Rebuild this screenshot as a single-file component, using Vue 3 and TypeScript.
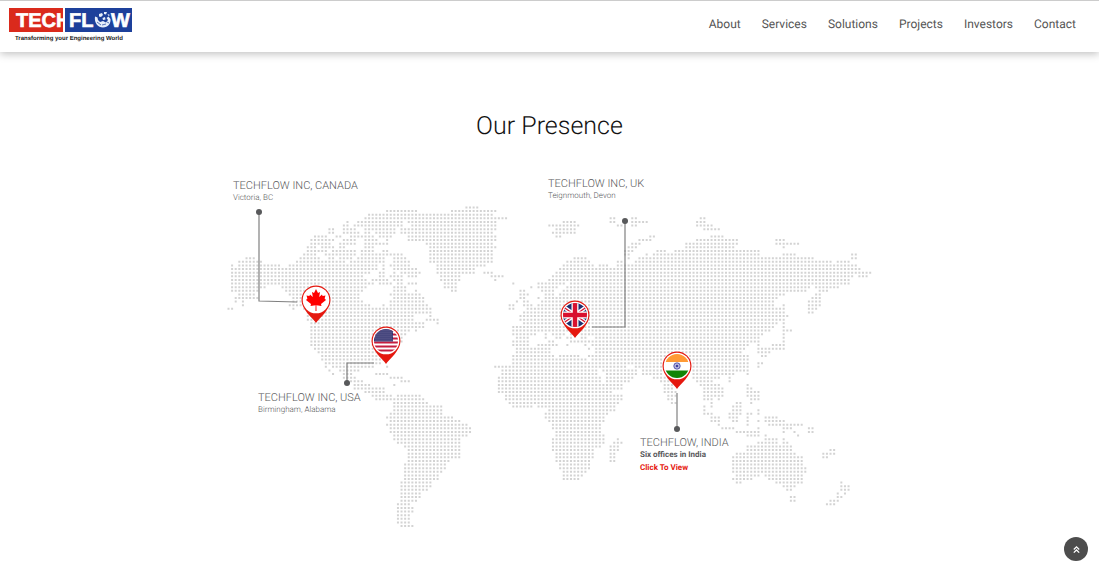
<script setup lang="ts">
interface Dot {
  x: number
  y: number
}

interface Office {
  id: string
  title: string
  detail: string
}

const links: string[] = ['About', 'Services', 'Solutions', 'Projects', 'Investors', 'Contact']

const offices: Office[] = [
  { id: 'canada', title: 'TECHFLOW INC, CANADA', detail: 'Victoria, BC' },
  { id: 'uk', title: 'TECHFLOW INC, UK', detail: 'Teignmouth, Devon' },
  { id: 'usa', title: 'TECHFLOW INC, USA', detail: 'Birmingham, Alabama' },
]

// Land extents for each latitude row, west to east, in map units.
const landRows: string[] = [
  '465-476',
  '386-415 451-494',
  '368-490',
  '364-507 610-613 631-636 699-703',
  '347 357-401 407-497 563-575 610-614 631-646 696-703',
  '343-347 354-400 411-497 549-579 617-620 631-637 696-710',
  '329-332 343-354 364-393 400-494 556-575 703-718',
  '329-332 343-357 364-370 377-393 400-490 553-575',
  '314-325 336-340 350-371 379-390 407-497 556-560 649-653 710-722',
  '311-332 343-354 364-375 386 407-494 638-650 696-736 778-785',
  '311-329 339-354 364-386 425-490 631-635 639 685-736 778-799',
  '307-314 322-332 339-343 364-372 432-494 627-635 685-732 782-785',
  '307-325 332-354 361-372 383-386 432-490 624-633 656-664 675-760',
  '304-314 325-354 361-401 432-490 624-628 646 653-760 782-796 853-857',
  '246-254 300-318 329-332 339-350 357-383 393-404 432-490 574-587 627 639-814 853-857',
  '240-261 297-345 350-383 393-408 432-490 567-590 617-621 635-832 839-849',
  '233 240-280 290-376 383 390-408 436-483 563-593 600-607 617-857',
  '233-376 383 393-415 436-472 560-597 600-610 614-860',
  '233-368 379-383 393 400-418 436-472 486-490 556-871',
  '233-361 379-383 390-400 408-415 440-458 490-504 553-853 860-867',
  '233-365 372-386 393-400 440-458 494-497 549-849',
  '233-372 379-389 397-400 408-415 443-454 514 539-563 570-849',
  '233-266 283-365 393-404 443-454 532 538-557 567-810 817-839',
  '233-256 287-361 393-404 415 451-454 522-525 542-553 563-807 821-828',
  '240-254 290-358 390-418 521-528 545-553 560-782 817-821',
  '236-257 293-360 393-422 521-525 538 545-778 814-821',
  '236 243 293-363 390-422 518 525-528 542-774 810-821',
  '243 290-368 383 390-425 511-515 525-532 538-774 785 810-821',
  '229-232 293 303-429 511-514 528-785 810-817',
  '307-429 525-785 810-814',
  '307-411 429 521-789',
  '307-411 425-436 521-785',
  '311-422 436 525-778 785',
  '311-422 514-774 785',
  '311-408 415 514-771 782-792',
  '311-404 514-535 547 553-563 570 581-589 593-763 782-785',
  '311-402 517-528 547 556-560 566-572 580-586 596-760 782-785',
  '311-400 514-528 550-553 570-577 583-589 593-760 782-785',
  '311-398 514-527 537-550 553-558 567 585 593-749 757-760 774-782',
  '314-396 517-550 590 597-745 757-782',
  '318-393 517-550 597-742 757-771',
  '321-390 514-553 560-577 590-747 763-767',
  '321-386 514-587 593-749',
  '325-379 514-597 600-749 760-763',
  '325 332-374 387 497-597 600-624 635-747 760',
  '328 339-358 503-597 603-637 642-660 690-747',
  '332 343-350 378-386 503-597 607-637 643-650 654-662 692-732 746',
  '343-354 389-402 500-600 607-633 654-668 694-720 728',
  '350-361 403-410 500-600 607-629 660-670 696-713 728',
  '353-368 393 500-602 607-623 663-673 700-720 749',
  '353-383 500-607 610-620 665-673 706-724 746-753',
  '367-383 500-612 665-676 706-724 746-757',
  '371-389 397-418 506-622 668-676 706-724 749-757',
  '378-422 506-620 668-673 706-710 717 753-757',
  '393-425 510-618 672-675 710-713 738-742 753',
  '393-440 514-530 538-615 703 713 735-742',
  '393-440 549-613 703-706 732-742 760',
  '390-440 545-607 706-710 728-742 749-753 760',
  '386-451 545-604 710-717 728-738 746-749 767-778',
  '390-461 549-604 713-717 732-738 746 757-760 767-785',
  '386-465 553-600 717 746-749 771-803',
  '390-469 553-600 721-732 757 782-792 810-813',
  '390-469 556-600 738-757 785 796 810-813',
  '393-465 556-603 749-757 767 799',
  '393-461 553-602 617 764-775 785',
  '397-461 553-602 613-620 757-775 785-789',
  '404-461 553-600 610-618 749-792',
  '408-458 553-593 610-618 749-792 832-835',
  '408-458 556-593 610-615 738-796 824-835',
  '408-458 556-593 610-615 735-800 824-828',
  '408-447 556-590 610-613 735-803',
  '404-443 560-590 735-803',
  '404-443 560-590 735-807',
  '404-440 563-587 735-807',
  '404-436 563-583 738-760 767-803',
  '404-436 563-578 735-753 771-800',
  '400-429 738-742 775-800 842',
  '400-429 782-796 842-849',
  '400-425 789-792 842-849',
  '400-418 839 846',
  '400-418 792-796 839-842',
  '400-415 792-796 832-839',
  '397-408 828-835',
  '397-411',
  '397-411',
  '397-408',
  '397-408',
  '397-408',
  '400-411',
]

const originX = 228.5
const originY = 207.5
const stepX = 3.605
const stepY = 3.62

const dots: Dot[] = landRows.flatMap((row, index) =>
  row.split(' ').flatMap((run) => {
    const ends = run.split('-').map(Number)
    const first = Math.round((ends[0] - originX) / stepX)
    const last = Math.round((ends[ends.length - 1] - originX) / stepX)
    return Array.from({ length: last - first + 1 }, (_, i) => ({
      x: originX + (first + i) * stepX,
      y: originY + index * stepY,
    }))
  }),
)

const landPath: string = dots
  .map((d) => `M${(d.x - 1).toFixed(2)} ${(d.y - 1).toFixed(2)}h2v2h-2z`)
  .join('')

const stars: Dot[] = Array.from({ length: 54 }, (_, i) => ({
  x: -11 + (i % 9) * 2 + (Math.floor(i / 9) % 2),
  y: -11 + Math.floor(i / 9) * 2,
}))

const spokes: number[] = Array.from({ length: 12 }, (_, i) => i * 30)

function toTop(): void {
  window.scrollTo({ top: 0, behavior: 'smooth' })
}
</script>

<template>
  <div class="page">
    <header class="header">
      <a class="brand" href="#" aria-label="Techflow home">
        <svg class="logo" viewBox="0 0 124 36" aria-hidden="true">
          <defs>
            <clipPath id="redBox"><rect width="54" height="24" /></clipPath>
          </defs>
          <rect width="54" height="24" fill="#da2a1c" />
          <rect x="56" width="67" height="24" fill="#1d409b" />
          <text class="mark" x="7" y="19" clip-path="url(#redBox)">TECH</text>
          <text class="mark" x="60" y="19">FL</text>
          <path
            d="M86 8.500C85 15 89 19.500 94 19.500C99 19.500 102 15.500 101.500 11L99.500 8.500L97.500 10L99 12L97 14.500L94 13L91 14L89 12L88.500 9.500z"
            fill="#e6eefa"
          />
          <path
            d="M90 6L93 5L94 7L92 9L90 8.500zM95 4H98L97 6.500L95 6zM93.500 10L96 9L96.500 11.500L94 12zM98.500 6L101 7L99.500 8z"
            fill="#e6eefa"
          />
          <path d="M88 14L92 17M93 17L97 16M98 14L100 15" stroke="#1d409b" stroke-width="0.7" />
          <text class="mark" x="102" y="19">W</text>
          <text class="tagline" x="6" y="32">Transforming your Engineering World</text>
        </svg>
      </a>
      <nav class="nav" aria-label="Main">
        <a v-for="link in links" :key="link" href="#">{{ link }}</a>
      </nav>
    </header>

    <main class="presence">
      <h1>Our Presence</h1>
      <div class="stage">
        <svg class="map" viewBox="220 170 659 365" role="img" aria-label="World map of offices">
          <path :d="landPath" fill="#d3d3d3" />

          <g class="connector">
            <path d="M259 212V301L297 302" />
            <path d="M625 221V327H592" />
            <path d="M374 363H347V383" />
            <path d="M677 393V429" />
          </g>
          <g fill="#58595b">
            <circle cx="259" cy="212" r="3" />
            <circle cx="625" cy="221" r="3" />
            <circle cx="347" cy="383" r="3" />
            <circle cx="677" cy="429" r="3" />
          </g>

          <defs>
            <clipPath id="flagDisc"><circle r="12" /></clipPath>
            <g id="pin">
              <path d="M0 23C-3 18-14.500 10-14.500 0A14.500 14.500 0 0 1 14.500 0C14.500 10 3 18 0 23z" fill="#e5180f" />
              <circle r="13.300" fill="#fff" />
            </g>
          </defs>

          <g transform="translate(316 300)">
            <use href="#pin" />
            <path
              d="M0-11L2-7L4-8L3.200-3L6-5.500L6.600-4L9.500-4.400L8.600-1.500L10 0L5 4L5.500 6L0.400 5.200L0.500 11H-0.500L-0.400 5.200L-5.500 6L-5 4L-10 0L-8.600-1.500L-9.500-4.400L-6.600-4L-6-5.500L-3.200-3L-4-8L-2-7z"
              fill="#f00"
            />
          </g>

          <g transform="translate(386 341)">
            <use href="#pin" />
            <g clip-path="url(#flagDisc)">
              <path d="M-12-10.500H12M-12-6.500H12M-12-2.500H12M-12 1.500H12M-12 5.500H12M-12 9.500H12" stroke="#c51e3f" stroke-width="2" />
              <rect x="-12" y="-12" width="19" height="12.500" fill="#34336f" />
              <circle v-for="(star, i) in stars" :key="i" :cx="star.x" :cy="star.y" r="0.5" fill="#b4b4cf" />
            </g>
          </g>

          <g transform="translate(575 315)">
            <use href="#pin" />
            <g clip-path="url(#flagDisc)">
              <rect x="-12" y="-12" width="24" height="24" fill="#1d2f70" />
              <path d="M-13-9L13 9M13-9L-13 9" stroke="#fff" stroke-width="4" />
              <path d="M-13-9L13 9M13-9L-13 9" stroke="#d8102f" stroke-width="1.200" />
              <path d="M0-12V12M-12 0H12" stroke="#fff" stroke-width="7" />
              <path d="M0-12V12M-12 0H12" stroke="#d8102f" stroke-width="4.400" />
            </g>
          </g>

          <g transform="translate(677 366)">
            <use href="#pin" />
            <g clip-path="url(#flagDisc)">
              <rect x="-12" y="-12" width="24" height="8" fill="#ff9a35" />
              <rect x="-12" y="4.500" width="24" height="8" fill="#128507" />
              <circle r="3.200" fill="#e4e4f4" stroke="#34349a" stroke-width="0.800" />
              <path
                v-for="angle in spokes"
                :key="angle"
                d="M0 0V3"
                :transform="`rotate(${angle})`"
                stroke="#34349a"
                stroke-width="0.300"
              />
              <circle r="1.100" fill="#34349a" />
            </g>
          </g>
        </svg>

        <div v-for="office in offices" :key="office.id" class="office" :class="office.id">
          <h2>{{ office.title }}</h2>
          <p>{{ office.detail }}</p>
        </div>
        <div class="office india">
          <h2>TECHFLOW, INDIA</h2>
          <p class="strong">Six offices in India</p>
          <a href="#">Click To View</a>
        </div>
      </div>
    </main>

    <button class="top" type="button" aria-label="Back to top" @click="toTop">
      <svg viewBox="0 0 10 10" aria-hidden="true">
        <path d="M2 5L5 2L8 5M2 8.500L5 5.500L8 8.500" fill="none" stroke="#fff" stroke-width="1.400" />
      </svg>
    </button>
  </div>
</template>

<style>
body {
  margin: 0;
  background: #fff;
}
</style>

<style scoped>
.page {
  font-family: Roboto, "Liberation Sans", sans-serif;
  text-rendering: geometricPrecision;
  color: #58595b;
}

.header {
  display: flex;
  justify-content: space-between;
  align-items: flex-start;
  box-sizing: border-box;
  height: 52px;
  padding: 7px 23px 0 9px;
  border-top: 1px solid #ccc;
  background: #fff;
  box-shadow: 0 2px 8px rgba(0, 0, 0, 0.25);
}

.brand,
.logo {
  display: block;
}

.logo {
  width: 124px;
  height: 36px;
}

.mark {
  font: bold 20px "Liberation Sans", sans-serif;
  fill: #fff;
  stroke: #fff;
  stroke-width: 0.6px;
}

.tagline {
  font: bold 6px "Liberation Sans", sans-serif;
  fill: #222;
}

.nav {
  display: flex;
  gap: 21px;
  padding-top: 8px;
}

.nav a {
  font-size: 12px;
  line-height: 16px;
  color: #555;
  text-decoration: none;
}

.presence {
  padding-top: 57px;
}

h1 {
  margin: 0;
  font-size: 25px;
  font-weight: 300;
  line-height: 36px;
  text-align: center;
  color: #111;
}

.stage {
  position: relative;
  max-width: 659px;
  margin: 25px auto 0;
}

.map {
  display: block;
  width: 100%;
}

.connector {
  fill: none;
  stroke: #808080;
  stroke-width: 1.2;
}

.office {
  position: absolute;
}

.office h2 {
  margin: 0;
  font-size: 11px;
  font-weight: 300;
  line-height: 12px;
}

.office p {
  margin: 0;
  font-size: 8px;
  font-weight: 300;
  line-height: 11px;
}

.office .strong {
  font-weight: 700;
}

.office a {
  display: block;
  margin-top: 2px;
  font-size: 8px;
  font-weight: 700;
  line-height: 11px;
  color: #e5180f;
  text-decoration: none;
}

.canada {
  left: 13px;
  top: 10px;
}

.uk {
  left: 328px;
  top: 8px;
}

.usa {
  left: 38px;
  top: 222px;
}

.india {
  left: 420px;
  top: 267px;
}

.top {
  position: fixed;
  right: 11px;
  bottom: 9px;
  display: grid;
  place-items: center;
  width: 24px;
  height: 24px;
  padding: 0;
  border: 0;
  border-radius: 50%;
  background: #4d4d4d;
}

.top svg {
  width: 9px;
  height: 9px;
}
</style>
